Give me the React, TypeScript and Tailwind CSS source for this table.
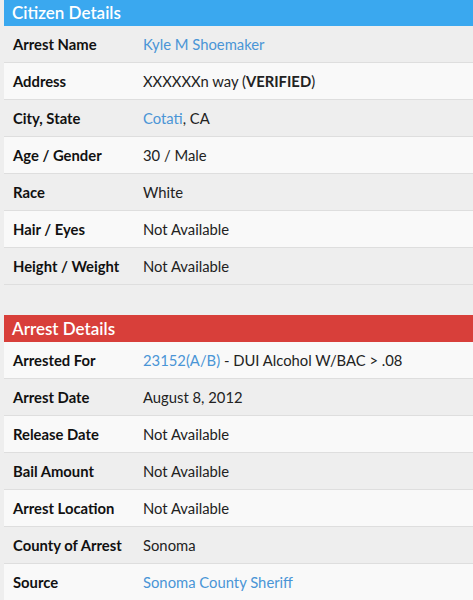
type Cell = string | JSX.Element;

const link = "text-[#4a95d6]";

const citizen: [string, Cell][] = [
  ["Arrest Name", <span className={link}>Kyle M Shoemaker</span>],
  ["Address", <span>XXXXXXn way (<b>VERIFIED</b>)</span>],
  ["City, State", <span><span className={link}>Cotati</span>, CA</span>],
  ["Age / Gender", "30 / Male"],
  ["Race", "White"],
  ["Hair / Eyes", "Not Available"],
  ["Height / Weight", "Not Available"],
];

const arrest: [string, Cell][] = [
  ["Arrested For", <span><span className={link}>23152(A/B)</span> - DUI Alcohol W/BAC &gt; .08</span>],
  ["Arrest Date", "August 8, 2012"],
  ["Release Date", "Not Available"],
  ["Bail Amount", "Not Available"],
  ["Arrest Location", "Not Available"],
  ["County of Arrest", "Sonoma"],
  ["Source", <span className={link}>Sonoma County Sheriff</span>],
];

function Section({ title, bar, head, rows, greyFirst }: { title: string; bar: string; head: string; rows: [string, Cell][]; greyFirst: boolean }) {
  return (
    <section>
      <h2 className={`${bar} ${head} text-white text-[17px] font-semibold px-[8px]`}>{title}</h2>
      {rows.map(([label, value], i) => {
        const grey = greyFirst ? i % 2 === 0 : i % 2 === 1;
        return (
          <div
            key={label}
            className={`flex items-center h-[37px] border-b border-[#dedede] text-[14.8px] ${grey ? "bg-[#eeeeee]" : "bg-[#f9f9f9]"}`}
          >
            <div className="w-[139px] pl-[9px] font-bold text-[#111]">{label}</div>
            <div className="text-[#222]">{value}</div>
          </div>
        );
      })}
    </section>
  );
}

export default function App() {
  return (
    <div className="min-h-[600px] bg-[#eeeeee] pl-[4px] font-['Lato','Liberation_Sans',sans-serif]">
      <Section title="Citizen Details" bar="bg-[#3aa8ef]" head="h-[26px] leading-[25px]" rows={citizen} greyFirst />
      <div className="h-[30px]" />
      <Section title="Arrest Details" bar="bg-[#d83f3a]" head="h-[27px] leading-[27px]" rows={arrest} greyFirst={false} />
    </div>
  );
}
